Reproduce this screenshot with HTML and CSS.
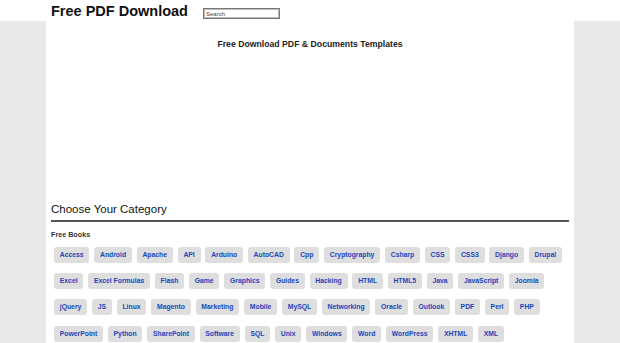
FILE: index.html
```html
<!DOCTYPE html>
<html>
<head>
	<meta charset="utf-8">
	<title>Free PDF Download</title>
	<link rel="stylesheet" href="styles.css">
</head>
<body>
	<!-- 顶部 -->
	<div class="header">
		<div class="header-inner">
			<h1 class="logo">Free PDF Download</h1>
			<input type="text" class="search" placeholder="Search">
		</div>
	</div>
	<div class="main">
		<h3 class="intro">Free Download PDF &amp; Documents Templates</h3>
		<div class="ad-space"></div>
		<h2 class="cat-title">Choose Your Category</h2>
		<h4 class="cat-sub">Free Books</h4>
		<div class="tags">
			<a class="tag" href="#">Access</a>
			<a class="tag" href="#">Android</a>
			<a class="tag" href="#">Apache</a>
			<a class="tag" href="#">API</a>
			<a class="tag" href="#">Arduino</a>
			<a class="tag" href="#">AutoCAD</a>
			<a class="tag" href="#">Cpp</a>
			<a class="tag" href="#">Cryptography</a>
			<a class="tag" href="#">Csharp</a>
			<a class="tag" href="#">CSS</a>
			<a class="tag" href="#">CSS3</a>
			<a class="tag" href="#">Django</a>
			<a class="tag" href="#">Drupal</a>
			<a class="tag" href="#">Excel</a>
			<a class="tag" href="#">Excel Formulas</a>
			<a class="tag" href="#">Flash</a>
			<a class="tag" href="#">Game</a>
			<a class="tag" href="#">Graphics</a>
			<a class="tag" href="#">Guides</a>
			<a class="tag" href="#">Hacking</a>
			<a class="tag" href="#">HTML</a>
			<a class="tag" href="#">HTML5</a>
			<a class="tag" href="#">Java</a>
			<a class="tag" href="#">JavaScript</a>
			<a class="tag" href="#">Joomla</a>
			<a class="tag" href="#">jQuery</a>
			<a class="tag" href="#">JS</a>
			<a class="tag" href="#">Linux</a>
			<a class="tag" href="#">Magento</a>
			<a class="tag" href="#">Marketing</a>
			<a class="tag" href="#">Mobile</a>
			<a class="tag" href="#">MySQL</a>
			<a class="tag" href="#">Networking</a>
			<a class="tag" href="#">Oracle</a>
			<a class="tag" href="#">Outlook</a>
			<a class="tag" href="#">PDF</a>
			<a class="tag" href="#">Perl</a>
			<a class="tag" href="#">PHP</a>
			<a class="tag" href="#">PowerPoint</a>
			<a class="tag" href="#">Python</a>
			<a class="tag" href="#">SharePoint</a>
			<a class="tag" href="#">Software</a>
			<a class="tag" href="#">SQL</a>
			<a class="tag" href="#">Unix</a>
			<a class="tag" href="#">Windows</a>
			<a class="tag" href="#">Word</a>
			<a class="tag" href="#">WordPress</a>
			<a class="tag" href="#">XHTML</a>
			<a class="tag" href="#">XML</a>
		</div>
	</div>
</body>
</html>
```
FILE: styles.css
```css
html,body{
	height:100%;
}
body{
	margin: 0;
	background: #e9e9e9;
	font-family: "Liberation Sans", Arial, sans-serif;
	color: #111;
}
.header{
	background: #fff;
	height: 21px;
}
.header-inner{
	width: 528px;
	margin: 0 auto;
	padding: 0 5px;
	box-sizing: border-box;
	display: flex;
	align-items: flex-start;
}
.logo{
	margin: 0;
	padding-top: 1px;
	font-size: 14.5px;
	line-height: 20px;
	font-weight: bold;
}
.search{
	margin: 8px 0 0 15px;
	width: 77px;
	height: 11px;
	box-sizing: border-box;
	border: 1px solid #777;
	box-shadow: inset 0 0 0 1px #bbb;
	padding: 0 2px;
	font-family: "Liberation Sans", Arial, sans-serif;
	font-size: 6px;
	outline: none;
}
.search::placeholder{
	color: #444;
}
.main{
	width: 528px;
	min-height: calc(100% - 21px);
	margin: 0 auto;
	padding: 0 5px;
	box-sizing: border-box;
	background: #fff;
	overflow: hidden;
}
.intro{
	margin: 17px 0 0;
	text-align: center;
	font-size: 8.7px;
	line-height: 12px;
	font-weight: bold;
	color: #222;
}
.ad-space{
	height: 152px;
}
.cat-title{
	margin: 0;
	font-size: 11.5px;
	line-height: 14px;
	font-weight: normal;
	color: #111;
	padding-bottom: 4px;
	border-bottom: 2px solid #555;
}
.cat-sub{
	margin: 7.5px 0 0;
	font-size: 7.2px;
	line-height: 10px;
	font-weight: bold;
	color: #333;
}
.tags{
	display: flex;
	flex-wrap: wrap;
	gap: 10.2px 4.8px;
	margin-top: 7.5px;
	padding-left: 3px;
}
.tag{
	display: block;
	height: 16px;
	line-height: 16px;
	padding: 0 5.8px;
	background: #dedede;
	border-radius: 3px;
	color: #1a46bb;
	font-size: 6.8px;
	font-weight: bold;
	text-decoration: none;
}
```
